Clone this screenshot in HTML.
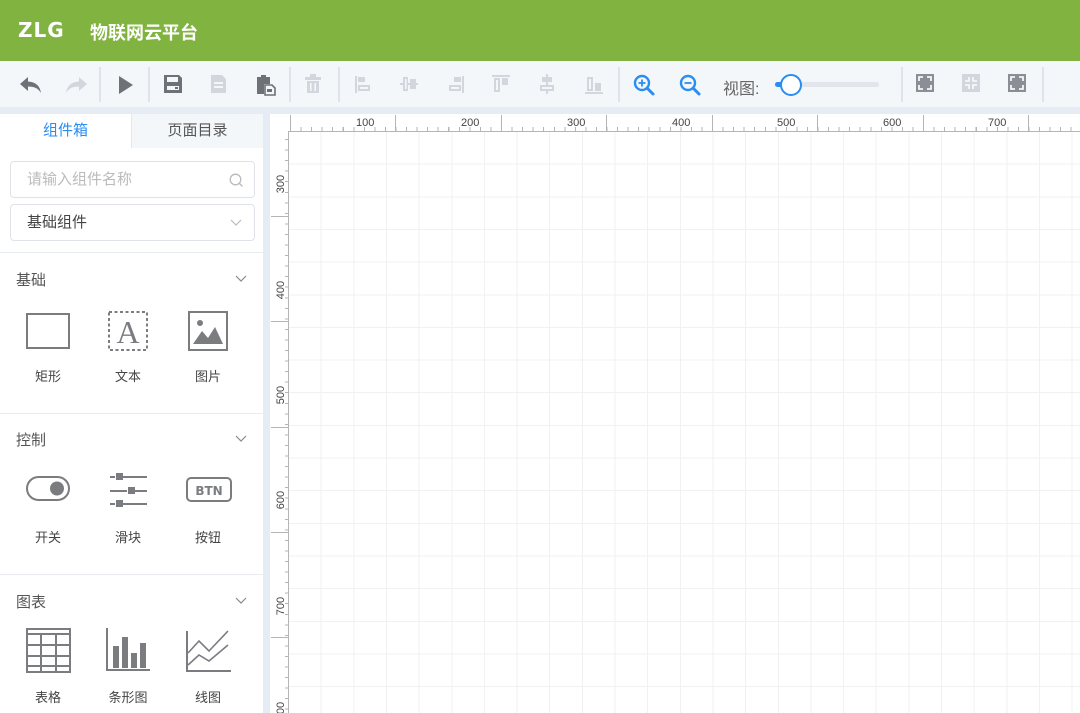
<!DOCTYPE html>
<html><head><meta charset="utf-8">
<style>
*{margin:0;padding:0;box-sizing:border-box}
body{width:1080px;height:713px;overflow:hidden;background:#e6ecf3;font-family:"Liberation Sans","Noto Sans CJK SC",sans-serif;position:relative}
.hdr{position:absolute;left:0;top:0;width:1080px;height:61px;background:#80b33f;color:#fff}
.logo{position:absolute;left:18px;top:18px;font-size:20px;font-weight:bold;letter-spacing:1px;font-family:"DejaVu Sans","Liberation Sans",sans-serif}
.title{position:absolute;left:90px;top:19px;font-size:18px;font-weight:bold}
.tb{position:absolute;left:0;top:61px;width:1080px;height:46px;background:#f4f7fa}
.sep{position:absolute;top:6px;width:2px;height:35px;background:#e0e4ea}
.ic{position:absolute;top:12px}
.vt{position:absolute;left:723px;top:14px;font-size:16px;color:#666}
.left{position:absolute;left:0;top:114px;width:263px;height:599px;background:#fff}
.tab{position:absolute;top:0;height:34px;line-height:34px;text-align:center;font-size:15px}
.inp{position:absolute;left:10px;width:245px;height:37px;border:1px solid #dfe3e8;border-radius:4px;font-size:15px;line-height:35px;padding-left:16px}
.hr{position:absolute;left:0;width:263px;height:1px;background:#e8ebef}
.sec{position:absolute;left:16px;font-size:15px;color:#555}
.chev{position:absolute;left:235px}
.lab{position:absolute;font-size:13px;color:#444;width:60px;text-align:center}
.canvas{position:absolute;left:270px;top:114px;width:810px;height:599px;background:#fff;overflow:hidden}
.rl{position:absolute;font-size:11px;color:#444}
.rv{position:absolute;font-size:11px;color:#444;left:1px;width:20px;text-align:center;transform:rotate(-90deg)}
</style></head><body>
<div class="hdr"><div class="logo">ZLG</div><div class="title">物联网云平台</div></div>
<div class="tb">
<svg class="ic" style="left:18px" width="26" height="24" viewBox="0 0 26 24"><path d="M10 4 L2 11 L10 18 V13.5 C16 13.5 20 15 23 20 C22 13 18 9 10 8.5 Z" fill="#6d7178"/></svg>
<svg class="ic" style="left:63px" width="26" height="24" viewBox="0 0 26 24"><path d="M16 4 L24 11 L16 18 V13.5 C10 13.5 6 15 3 20 C4 13 8 9 16 8.5 Z" fill="#d3d7dd"/></svg>
<div class="sep" style="left:99px"></div>
<svg class="ic" style="left:116px" width="20" height="24" viewBox="0 0 20 24"><path d="M3 3 L17 12 L3 21 Z" fill="#6d7178"/></svg>
<div class="sep" style="left:148px"></div>
<svg class="ic" style="left:163px" width="20" height="22" viewBox="0 0 20 22"><path d="M1 2 H16 L19 5 V20 H1 Z" fill="#6d7178"/><rect x="4" y="4" width="11" height="5" fill="#f4f7fa"/><rect x="4" y="13" width="12" height="4" fill="#f4f7fa"/><rect x="12" y="14" width="3" height="2" fill="#6d7178"/></svg>
<svg class="ic" style="left:208px" width="20" height="22" viewBox="0 0 20 22"><path d="M3 2 H14 L18 6 V20 H3 Z" fill="#d3d7dd"/><rect x="6" y="9" width="9" height="2" fill="#f4f7fa"/><rect x="6" y="13" width="9" height="2" fill="#f4f7fa"/></svg>
<svg class="ic" style="left:255px" width="22" height="24" viewBox="0 0 22 24"><path d="M2 4 H15 V11 H9 V21 H2 Z" fill="#6d7178"/><rect x="6" y="2" width="5" height="4" fill="#6d7178"/><path d="M10 12 H17 L20 15 V22 H10 Z" fill="none" stroke="#6d7178" stroke-width="1.6"/><rect x="12" y="16" width="5" height="3" fill="#6d7178"/></svg>
<div class="sep" style="left:289px"></div>
<svg class="ic" style="left:303px" width="20" height="22" viewBox="0 0 20 22"><rect x="2" y="4" width="16" height="3" fill="#d3d7dd"/><rect x="7" y="1" width="6" height="3" fill="#d3d7dd"/><path d="M4 8 H16 V20 H4 Z" fill="#d3d7dd"/><rect x="7" y="10" width="1.6" height="8" fill="#f4f7fa"/><rect x="11.4" y="10" width="1.6" height="8" fill="#f4f7fa"/></svg>
<div class="sep" style="left:338px"></div>
<svg class="ic" style="left:352px" width="22" height="22" viewBox="0 0 22 22"><g fill="#d3d7dd"><rect x="3" y="3" width="2" height="17"/><rect x="6" y="4" width="7" height="5"/><rect x="6" y="12" width="12" height="6"/></g><rect x="8" y="14" width="8" height="2" fill="#f4f7fa"/></svg>
<svg class="ic" style="left:398px" width="22" height="22" viewBox="0 0 22 22"><g fill="#d3d7dd"><rect x="2" y="10" width="18" height="2"/><rect x="5" y="4" width="5" height="14"/><rect x="12" y="6" width="6" height="10"/></g><rect x="7" y="6" width="1.6" height="10" fill="#f4f7fa"/></svg>
<svg class="ic" style="left:445px" width="22" height="22" viewBox="0 0 22 22"><g fill="#d3d7dd"><rect x="17" y="3" width="2" height="17"/><rect x="9" y="4" width="7" height="5"/><rect x="4" y="12" width="12" height="6"/></g><rect x="6" y="14" width="8" height="2" fill="#f4f7fa"/></svg>
<svg class="ic" style="left:490px" width="22" height="22" viewBox="0 0 22 22"><g fill="#d3d7dd"><rect x="2" y="2" width="18" height="2"/><rect x="4" y="5" width="6" height="14"/><rect x="12" y="5" width="6" height="7"/></g><rect x="6" y="7" width="2" height="10" fill="#f4f7fa"/></svg>
<svg class="ic" style="left:536px" width="22" height="22" viewBox="0 0 22 22"><g fill="#d3d7dd"><rect x="10" y="1" width="2" height="20"/><rect x="6" y="4" width="10" height="5"/><rect x="4" y="12" width="14" height="6"/></g><rect x="6" y="14" width="10" height="2" fill="#f4f7fa"/></svg>
<svg class="ic" style="left:583px" width="22" height="22" viewBox="0 0 22 22"><g fill="#d3d7dd"><rect x="2" y="19" width="18" height="2"/><rect x="4" y="4" width="6" height="14"/><rect x="12" y="10" width="6" height="8"/></g><rect x="6" y="6" width="2" height="10" fill="#f4f7fa"/></svg>
<div class="sep" style="left:618px"></div>
<svg class="ic" style="left:632px" width="24" height="24" viewBox="0 0 24 24"><circle cx="10" cy="10" r="7" fill="none" stroke="#2a8df0" stroke-width="2.4"/><path d="M15 15 L21 21" stroke="#2a8df0" stroke-width="3" stroke-linecap="round"/><path d="M6.5 10 H13.5 M10 6.5 V13.5" stroke="#2a8df0" stroke-width="1.8"/></svg>
<svg class="ic" style="left:678px" width="24" height="24" viewBox="0 0 24 24"><circle cx="10" cy="10" r="7" fill="none" stroke="#2a8df0" stroke-width="2.4"/><path d="M15 15 L21 21" stroke="#2a8df0" stroke-width="3" stroke-linecap="round"/><path d="M6.5 10 H13.5" stroke="#2a8df0" stroke-width="1.8"/></svg>
<div class="vt">视图:</div>
<div style="position:absolute;left:775px;top:21px;width:104px;height:5px;border-radius:3px;background:#e2e6ec"></div>
<div style="position:absolute;left:775px;top:21px;width:16px;height:5px;border-radius:3px;background:#2a8df0"></div>
<div style="position:absolute;left:780px;top:13px;width:22px;height:22px;border-radius:50%;background:#fff;border:2px solid #2a8df0"></div>
<div class="sep" style="left:901px"></div>
<svg class="ic" style="left:915px" width="20" height="20" viewBox="0 0 20 20"><rect x="1" y="1" width="18" height="18" fill="#8a8e95"/><path d="M4 8 V4 H8 M12 4 H16 V8 M16 12 V16 H12 M8 16 H4 V12" fill="none" stroke="#f4f7fa" stroke-width="1.8"/></svg>
<svg class="ic" style="left:961px" width="20" height="20" viewBox="0 0 20 20"><rect x="1" y="1" width="18" height="18" fill="#d3d7dd"/><path d="M8 4 V8 H4 M12 4 V8 H16 M16 12 H12 V16 M8 16 V12 H4" fill="none" stroke="#f4f7fa" stroke-width="1.8"/></svg>
<svg class="ic" style="left:1007px" width="20" height="20" viewBox="0 0 20 20"><rect x="1" y="1" width="18" height="18" fill="#8a8e95"/><path d="M4 8 V4 H8 M12 4 H16 V8 M16 12 V16 H12 M8 16 H4 V12" fill="none" stroke="#f4f7fa" stroke-width="1.8"/></svg>
<div class="sep" style="left:1042px"></div>
</div>

<div class="left">
<div class="tab" style="left:0;width:131px;color:#2a8df0;background:#fff">组件箱</div>
<div class="tab" style="left:131px;width:132px;color:#555;background:#f4f7fa;border-left:1px solid #e4e8ee">页面目录</div>
<div class="inp" style="top:47px;color:#bbb">请输入组件名称
<svg style="position:absolute;right:10px;top:11px" width="15" height="15" viewBox="0 0 15 15"><circle cx="6.5" cy="6.5" r="5.3" fill="none" stroke="#bbb" stroke-width="1.3"/><path d="M10.5 10.5 L13.5 13.5" stroke="#bbb" stroke-width="1.3"/></svg></div>
<div class="inp" style="top:90px;color:#444">基础组件
<svg style="position:absolute;right:12px;top:14px" width="12" height="8" viewBox="0 0 12 8"><path d="M1 1 L6 6 L11 1" fill="none" stroke="#bbb" stroke-width="1.2"/></svg></div>
<div class="hr" style="top:138px"></div>
<div class="sec" style="top:155px">基础</div>
<svg class="chev" style="top:161px" width="12" height="8" viewBox="0 0 12 8"><path d="M1 1 L6 6 L11 1" fill="none" stroke="#888" stroke-width="1.2"/></svg>
<svg style="position:absolute;left:26px;top:199px" width="44" height="36"><rect x="1" y="1" width="42" height="34" fill="none" stroke="#7a7c80" stroke-width="2"/></svg>
<svg style="position:absolute;left:107px;top:196px" width="42" height="42"><rect x="2" y="2" width="38" height="38" fill="none" stroke="#7a7c80" stroke-width="2" stroke-dasharray="3 2.5"/><text x="21" y="33" text-anchor="middle" font-family="Liberation Serif,serif" font-size="32" fill="#7a7c80">A</text></svg>
<svg style="position:absolute;left:188px;top:197px" width="40" height="40"><rect x="1" y="1" width="38" height="38" fill="none" stroke="#7a7c80" stroke-width="2"/><circle cx="12" cy="12" r="3" fill="#7a7c80"/><path d="M5 33 L14 20 L20 27 L27 16 L35 33 Z" fill="#7a7c80"/></svg>
<div class="lab" style="left:18px;top:252px">矩形</div><div class="lab" style="left:98px;top:252px">文本</div><div class="lab" style="left:178px;top:252px">图片</div>
<div class="hr" style="top:299px"></div>
<div class="sec" style="top:315px">控制</div>
<svg class="chev" style="top:321px" width="12" height="8" viewBox="0 0 12 8"><path d="M1 1 L6 6 L11 1" fill="none" stroke="#888" stroke-width="1.2"/></svg>
<svg style="position:absolute;left:26px;top:362px" width="44" height="26"><rect x="1" y="1" width="42" height="23" rx="11.5" fill="none" stroke="#7a7c80" stroke-width="2"/><circle cx="31" cy="12.5" r="7" fill="#7a7c80"/></svg>
<svg style="position:absolute;left:108px;top:359px" width="40" height="34"><g stroke="#7a7c80" stroke-width="2"><path d="M2 4 H7 M15 4 H39 M2 18 H19 M27 18 H39 M2 31 H7 M15 31 H39"/></g><g fill="#7a7c80"><rect x="8" y="0" width="7" height="7"/><rect x="20" y="14" width="7" height="7"/><rect x="8" y="27" width="7" height="7"/></g></svg>
<svg style="position:absolute;left:186px;top:363px" width="46" height="26"><rect x="1" y="1" width="44" height="23" rx="4" fill="none" stroke="#7a7c80" stroke-width="2"/><text x="23" y="18" text-anchor="middle" font-family="DejaVu Sans,sans-serif" font-weight="bold" font-size="12" fill="#7a7c80">BTN</text></svg>
<div class="lab" style="left:18px;top:413px">开关</div><div class="lab" style="left:98px;top:413px">滑块</div><div class="lab" style="left:178px;top:413px">按钮</div>
<div class="hr" style="top:460px"></div>
<div class="sec" style="top:477px">图表</div>
<svg class="chev" style="top:483px" width="12" height="8" viewBox="0 0 12 8"><path d="M1 1 L6 6 L11 1" fill="none" stroke="#888" stroke-width="1.2"/></svg>
<svg style="position:absolute;left:26px;top:514px" width="46" height="46"><rect x="1" y="1" width="43" height="43" fill="none" stroke="#7a7c80" stroke-width="2"/><g stroke="#7a7c80" stroke-width="2"><path d="M1 6 H44 M1 17 H44 M1 28 H44 M1 38 H44 M15 6 V44 M30 6 V44"/></g></svg>
<svg style="position:absolute;left:105px;top:513px" width="46" height="46"><path d="M2 1 V43 H45" fill="none" stroke="#7a7c80" stroke-width="2"/><g fill="#7a7c80"><rect x="8" y="19" width="6" height="22"/><rect x="17" y="10" width="6" height="31"/><rect x="26" y="26" width="6" height="15"/><rect x="35" y="16" width="6" height="25"/></g></svg>
<svg style="position:absolute;left:185px;top:513px" width="46" height="46"><path d="M2 4 V44 H46" fill="none" stroke="#7a7c80" stroke-width="2"/><path d="M3 26 L14 14 L24 24 L43 4 M3 38 L14 28 L24 34 L43 18" fill="none" stroke="#7a7c80" stroke-width="1.6"/></svg>
<div class="lab" style="left:18px;top:573px">表格</div><div class="lab" style="left:98px;top:573px">条形图</div><div class="lab" style="left:178px;top:573px">线图</div>
</div>

<div class="canvas">
<div style="position:absolute;left:19px;top:18px;right:0;bottom:0;background:
repeating-linear-gradient(90deg,transparent 0 31.65px,#f1f1f1 31.65px 32.65px),
repeating-linear-gradient(180deg,transparent 0 31.65px,#f1f1f1 31.65px 32.65px)"></div>
<svg style="position:absolute;left:0;top:0" width="810" height="599">
<g stroke="#b5b5b5" stroke-width="1">
<path d="M19 17.5 H810 M18.5 17 V599"/>
<path d="M20.5 1 V17 M125.5 1 V17 M231.5 1 V17 M336.5 1 V17 M442.5 1 V17 M547.5 1 V17 M653.5 1 V17 M758.5 1 V17"/>
<path d="M1 102.5 H19 M1 207.5 H19 M1 313.5 H19 M1 418.5 H19 M1 523.5 H19"/>
</g>
</svg>
<div style="position:absolute;left:20px;top:13px;width:790px;height:4px;background:repeating-linear-gradient(90deg,#b5b5b5 0 1px,transparent 1px 10.55px)"></div>
<div style="position:absolute;left:15px;top:18px;width:4px;height:581px;background:repeating-linear-gradient(180deg,transparent 0 7px,#b5b5b5 7px 8px,transparent 8px 10.55px)"></div>
<div class="rl" style="left:86px;top:3px">100</div><div class="rl" style="left:191px;top:3px">200</div><div class="rl" style="left:297px;top:3px">300</div><div class="rl" style="left:402px;top:3px">400</div><div class="rl" style="left:507px;top:3px">500</div><div class="rl" style="left:613px;top:3px">600</div><div class="rl" style="left:718px;top:3px">700</div>
<div class="rv" style="top:64px">300</div>
<div class="rv" style="top:170px">400</div>
<div class="rv" style="top:275px">500</div>
<div class="rv" style="top:380px">600</div>
<div class="rv" style="top:486px">700</div>
<div class="rv" style="top:591px">800</div>
</div>
</body></html>
